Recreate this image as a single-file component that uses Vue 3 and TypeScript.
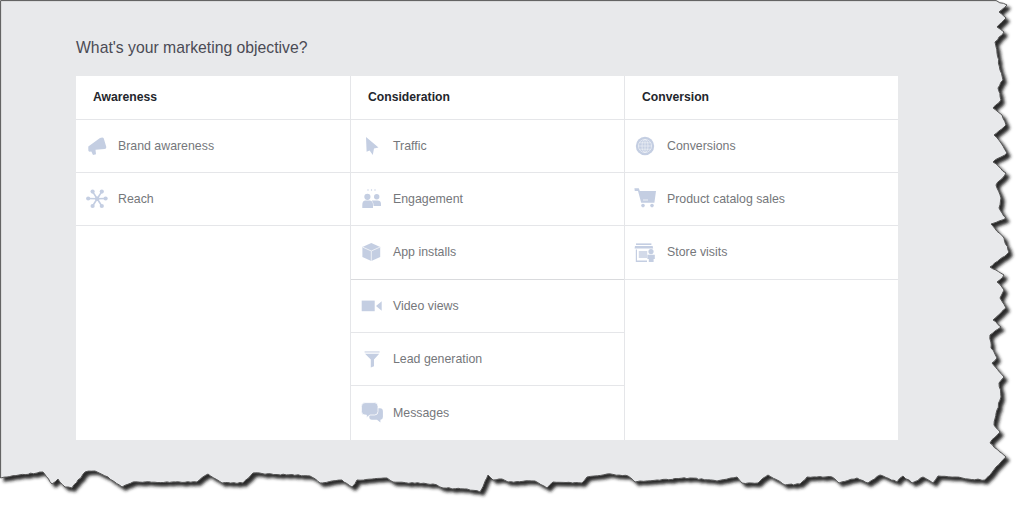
<script setup lang="ts">
interface Item { label: string; icon: string }
interface Column { title: string; items: Item[] }

const columns: Column[] = [
  { title: 'Awareness', items: [
    { label: 'Brand awareness', icon: 'megaphone' },
    { label: 'Reach', icon: 'reach' },
  ] },
  { title: 'Consideration', items: [
    { label: 'Traffic', icon: 'cursor' },
    { label: 'Engagement', icon: 'people' },
    { label: 'App installs', icon: 'cube' },
    { label: 'Video views', icon: 'video' },
    { label: 'Lead generation', icon: 'funnel' },
    { label: 'Messages', icon: 'messages' },
  ] },
  { title: 'Conversion', items: [
    { label: 'Conversions', icon: 'globe' },
    { label: 'Product catalog sales', icon: 'cart' },
    { label: 'Store visits', icon: 'store' },
  ] },
]

const reachArms: [number, number][] = [[3.2, 11.5], [20.6, 11.5], [7.6, 4.6], [16.8, 4.6], [7.6, 19], [16.8, 19]]

const tornAnchors = `996,0.6 997,1 1007,5 999,12 1006,18 997,27 1004,32 995,42 997,53 1000,70 1003,80 998,88 1001,100
993,108 1002,115 1006,125 994,135 1001,143 1007,153 993,162 1006,173 996,185 1001,198 999,208 1006,218 991,224 1004,238
1008,250 1009,252 990,267 1004,275 997,282 1004,290 1000,298 1006,308 993,320 1001,327 990,335 991,348 997,358 992,363
1004,377 999,383 1001,397 997,410 994,425 1000,432 990,443 1006,457 996,467 985,480 968,479 955,477 938,476 933,483
923,477 912,483 903,476 897,482 880,475 868,483 857,478 839,483 832,477 807,477 800,484 785,485 768,475 758,483 742,483
737,477 717,481 690,478 657,480 640,481 635,482 628,476 607,474 587,477 582,483 553,482 547,488 535,481 508,482 502,479
493,480 488,475 480,492 467,489 443,488 433,484 393,482 387,478 357,480 352,487 342,480 320,483 310,476 253,473 243,483
222,483 208,474 197,482 133,482 122,487 108,477 95,471 85,472 72,488 65,487 58,479 52,484 43,472 7,477 0.6,478`
  .trim()
  .split(/\s+/)
  .map((p) => p.split(',').map(Number))

// Adds the fine fibre of a torn edge between the hand-placed anchor points.
function roughen(anchors: number[][]): string {
  let seed = 7
  const rand = () => {
    seed = (seed * 16807) % 2147483647
    return seed / 2147483647 - 0.5
  }
  const out: string[] = ['0.6,0.6']
  anchors.forEach((a, i) => {
    out.push(`${a[0]},${a[1]}`)
    const b = anchors[i + 1]
    if (!b) return
    const len = Math.hypot(b[0] - a[0], b[1] - a[1])
    const steps = Math.floor(len / 3)
    for (let s = 1; s < steps; s++) {
      const t = s / steps
      out.push(`${(a[0] + (b[0] - a[0]) * t + rand() * 1.1).toFixed(1)},${(a[1] + (b[1] - a[1]) * t + rand() * 1.1).toFixed(1)}`)
    }
  })
  return out.join(' ')
}

const tornEdge = roughen(tornAnchors)
</script>

<template>
  <div class="page">
    <svg class="paper" width="1024" height="505" viewBox="0 0 1024 505" aria-hidden="true">
      <defs>
        <filter id="tornShadow" x="-5%" y="-5%" width="110%" height="110%">
          <feDropShadow dx="3.5" dy="3.5" stdDeviation="1.6" flood-color="#1c1c1c" flood-opacity="0.95" />
        </filter>
      </defs>
      <polygon :points="tornEdge" fill="#e8e9eb" stroke="#555" stroke-width="1" filter="url(#tornShadow)" />
    </svg>

    <main class="content">
      <h1 class="title">What's your marketing objective?</h1>
      <section class="table">
        <div v-for="col in columns" :key="col.title" class="col">
          <h2 class="head">{{ col.title }}</h2>
          <div v-for="item in col.items" :key="item.label" class="row">
            <svg class="icon" width="24" height="24" viewBox="0 0 24 24" aria-hidden="true">
              <template v-if="item.icon === 'megaphone'">
                <path d="M3.3 12.5 15 4Q18 2.6 18.8 4.5L21.3 13Q21.6 15 19.5 15L10.5 15.8 11 20.3 8 21 6.3 17.6 4.5 17.8Q3 17.4 3.3 15Z" />
              </template>
              <template v-else-if="item.icon === 'reach'">
                <line v-for="(p, i) in reachArms" :key="i" x1="12.2" y1="11.8" :x2="p[0]" :y2="p[1]" class="arm" />
                <circle v-for="(p, i) in reachArms" :key="'c' + i" :cx="p[0]" :cy="p[1]" r="2.1" />
                <circle cx="12.2" cy="11.8" r="2.3" />
              </template>
              <template v-else-if="item.icon === 'cursor'">
                <path d="M6 3 18.5 13.6 14 14.5 12.8 21 9.6 16.6 6.6 17.8Z" />
              </template>
              <template v-else-if="item.icon === 'people'">
                <circle cx="8" cy="3" r=".7" /><circle cx="11.5" cy="3" r=".7" /><circle cx="15" cy="3" r=".7" />
                <circle cx="7.4" cy="9.8" r="3.1" /><circle cx="16.7" cy="9.8" r="2.7" />
                <path d="M11.8 13.6h5.6Q21 13.6 21 17v2h-7.4Q13.6 15.6 11.8 13.6Z" />
                <path d="M5 13.6h5Q13 14 13 18v3H2.3v-3Q2.3 14 5 13.6Z" />
              </template>
              <template v-else-if="item.icon === 'cube'">
                <path d="M11.3 3 20.2 7v10L11.3 21 2.4 17V7Z" />
                <path class="cut" d="M2.4 7 11.3 11 20.2 7M11.3 11V21" />
              </template>
              <template v-else-if="item.icon === 'video'">
                <rect x="1.7" y="6.6" width="13" height="10.6" />
                <path d="M16 12 21.7 7.2V16.8Z" />
              </template>
              <template v-else-if="item.icon === 'funnel'">
                <rect x="4.6" y="4.2" width="15" height="1.5" opacity=".7" />
                <path d="M5 6.8H19.2L14 12.6V19.2L10.8 20.4V12.6Z" />
              </template>
              <template v-else-if="item.icon === 'messages'">
                <path d="M13 7.2H20Q22.9 7.2 22.9 10.2V16Q22.9 18.6 20.4 18.8V21.6L17 18.8H12Q9.3 18.8 9.3 16V10Q9.3 7.2 13 7.2Z" />
                <path class="front" d="M5 1.6H14.6Q18 1.6 18 5.4V10.4Q18 14 14.6 14H10L6.4 16.8V14H5Q1.4 14 1.4 10.4V5.4Q1.4 1.6 5 1.6Z" />
              </template>
              <template v-else-if="item.icon === 'globe'">
                <circle cx="11" cy="12" r="9.2" />
                <g class="grid-lines">
                  <circle cx="11" cy="12" r="6.6" />
                  <ellipse cx="11" cy="12" rx="3" ry="6.6" />
                  <path d="M11 5.4V18.6M4.4 12H17.6M5.3 8.8H16.7M5.3 15.2H16.7" />
                </g>
              </template>
              <template v-else-if="item.icon === 'cart'">
                <path d="M0.4 1.2H4.8L5.8 4H22L20.4 15.8H7.2L4 4H0.8Z" />
                <circle cx="9" cy="18.6" r="1.8" /><circle cx="18" cy="18.6" r="1.8" />
                <path class="cut" d="M9 13H14" />
              </template>
              <template v-else>
                <path d="M2 3.4H17.4V5H2Z" />
                <path d="M1 6H18.6L19.2 8.6H.6Z" />
                <path d="M1.8 9.6H3V20.6H13V22H1.8Z" />
                <path d="M4.8 11H13.2V18H4.8Z" opacity=".75" />
                <circle cx="17" cy="11.6" r="2.6" />
                <path d="M13.4 14.8H20.8V19H19.6V22H14.8V19H13.4Z" />
              </template>
            </svg>
            <span class="label">{{ item.label }}</span>
          </div>
        </div>
      </section>
    </main>
  </div>
</template>

<style scoped>
.page {
  position: relative;
  width: 1024px;
  height: 505px;
  overflow: hidden;
  background: #fff;
  font-family: "Liberation Sans", Arial, sans-serif;
}
.paper {
  position: absolute;
  inset: 0;
}
.content {
  position: relative;
  width: 822px;
  margin-left: 76px;
  padding-top: 36px;
}
.title {
  margin: 0 0 16px;
  font-size: 15.75px;
  font-weight: 400;
  line-height: 23px;
  padding-bottom: 1px;
  color: #4b4b55;
}
.table {
  display: grid;
  grid-template-columns: 274px 274px 274px;
  height: 364px;
  background: #fff;
}
.col {
  border-left: 1px solid #e5e6e9;
}
.col:first-child {
  border-left: 0;
}
.head {
  box-sizing: border-box;
  height: 44px;
  margin: 0;
  padding-left: 17px;
  font-size: 12.2px;
  font-weight: 700;
  line-height: 43px;
  color: #23262c;
  border-bottom: 1px solid #e5e6e9;
}
.row {
  box-sizing: border-box;
  display: flex;
  align-items: center;
  gap: 9px;
  height: 53.2px;
  padding-left: 9px;
  border-bottom: 1px solid #e5e6e9;
}
.row:nth-child(7) {
  height: 54px;
  border-bottom: 0;
}
.col:nth-child(2) .row:nth-child(4) {
  border-bottom-color: #d9dadd;
}
.icon {
  flex: none;
  fill: #c4cee2;
}
.arm {
  stroke: #c4cee2;
  stroke-width: 1.6;
}
.cut {
  fill: none;
  stroke: #eef1f6;
  stroke-width: 1;
}
.front {
  stroke: #fff;
  stroke-width: .8;
}
.grid-lines {
  fill: none;
  stroke: #eef1f6;
  stroke-width: .7;
}
.label {
  font-size: 12.35px;
  color: #75777b;
}
</style>
